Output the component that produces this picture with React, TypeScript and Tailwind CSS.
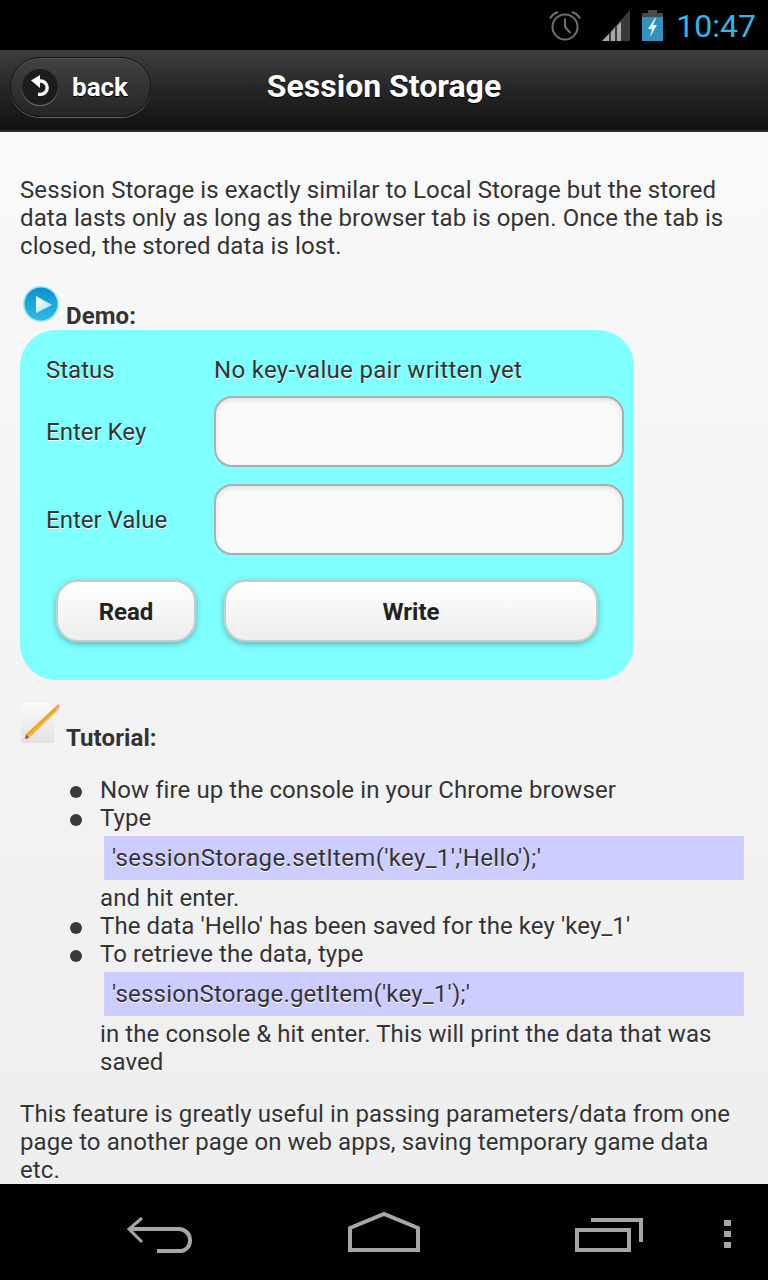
import { ReactNode } from "react";

function StatusBar() {
    return (
        <div className="h-[50px] bg-black flex items-center justify-end pr-[12px]">
            <svg width="34" height="32" viewBox="0 0 34 32" className="mr-[20px] mt-[2px]" fill="none" stroke="#6f6f6f" strokeWidth="2">
                <circle cx="17" cy="17" r="12.5" />
                <path d="M17 8.500V17l5.500 6" />
                <path d="M2 8.500C4 5 6.500 3 10 2M32 8.500C30 5 27.500 3 24 2" />
            </svg>
            <svg width="28" height="32" viewBox="0 0 28 32" className="mr-[12px] mt-[1px]">
                <path d="M0 31 28 0v31z" fill="#3a3a3a" />
                <path d="M0 31 7 24v7zM9 22l4-4.500V31H9zM15 16l4-4.500V31h-4z" fill="#a8a8a8" />
            </svg>
            <svg width="21" height="31" viewBox="0 0 21 31" className="mr-[13px]">
                <rect x="6" y="0" width="9" height="3" fill="#4a4a4a" />
                <rect x="0" y="3" width="21" height="7" fill="#4a4a4a" />
                <rect x="0" y="7" width="21" height="24" fill="#2f93bd" />
                <path d="M13 8 6 19h4l-2 8 7-12h-4l3-7z" fill="#e6f6fb" />
            </svg>
            <span className="font-['Roboto',sans-serif] text-[32px] leading-none text-[#33b5e5] mt-[2px]">10:47</span>
        </div>
    );
}

function Header() {
    return (
        <div className="relative h-[82px] bg-gradient-to-b from-[#3d3d3d] to-[#111111] border-b-2 border-[#2a2a2a] flex items-center justify-center pb-[8px]">
            <div className="absolute left-[10px] top-[7px] w-[141px] h-[60px] rounded-full border border-[#111] bg-gradient-to-b from-[#424242] to-[#252525] shadow-[0_1px_0_#666,inset_0_1px_0_#555] flex items-center pl-[11px]">
                <div className="w-[36px] h-[36px] rounded-full bg-[#1c1c1c] shadow-[0_1px_0_#777] flex items-center justify-center">
                    <svg width="22" height="24" viewBox="0 0 22 24" fill="none" stroke="#fff" strokeWidth="3.400">
                        <path d="M9 6h2.500a6.700 6.700 0 0 1 0 13.400H9" />
                        <path d="M2 5.500 11 0v13z" fill="#fff" stroke="none" />
                    </svg>
                </div>
                <span className="ml-[14px] text-[26px] font-bold text-white [text-shadow:0_1px_1px_#000]">back</span>
            </div>
            <h1 className="text-[32px] font-bold text-white [text-shadow:0_1px_1px_#000]">Session Storage</h1>
        </div>
    );
}

function Row({ label, children }: { label: string; children: ReactNode }) {
    return (
        <div className="flex items-center">
            <div className="w-[168px] shrink-0">{label}</div>
            {children}
        </div>
    );
}

function Field() {
    return (
        <div className="w-[410px] h-[71px] rounded-[18px] border-2 border-[#aeaeae] bg-[#f9f9f9] shadow-[inset_0_2px_4px_rgba(0,0,0,0.1)]" />
    );
}

function Button({ label, width }: { label: string; width: string }) {
    return (
        <div className={`${width} h-[62px] pt-[2px] rounded-[22px] border-2 border-[#cacaca] bg-gradient-to-b from-white to-[#ededed] shadow-[0_2px_6px_rgba(0,0,0,0.3)] flex items-center justify-center font-bold text-[#222]`}>
            {label}
        </div>
    );
}

function Code({ tracking, children }: { tracking: string; children: string }) {
    return (
        <div className={`${tracking} ml-[4px] mt-[4px] mb-[4px] w-[640px] h-[44px] bg-[#ccccff] pl-[8px] flex items-center`}>{children}</div>
    );
}

function Bullet({ children }: { children: ReactNode }) {
    return (
        <li className="relative">
            <span className="absolute left-[-30px] top-[10px] w-[12px] h-[12px] rounded-full bg-[#3a3a3a]" />
            {children}
        </li>
    );
}

function Content() {
    return (
        <div className="h-[1052px] overflow-hidden bg-gradient-to-b from-[#f9f9f9] to-[#eeeeee] px-[20px] pt-[44px] font-['Roboto',sans-serif] text-[24px] leading-[28px] tracking-[0.09px] text-[#333] [text-shadow:0_1px_0_#fff]">
            <p>
                Session Storage is exactly similar to Local Storage but the stored data lasts only as long as the browser tab is open. Once the tab is closed, the stored data is lost.
            </p>
            <div className="flex items-end h-[70px]">
                <svg width="40" height="40" viewBox="0 0 40 40" className="mb-[6px] ml-[2px] mr-[4px]">
                    <defs>
                        <linearGradient id="demoBlue" x1="0" y1="0" x2="0" y2="1">
                            <stop offset="0" stopColor="#0f8fd0" />
                            <stop offset="1" stopColor="#2bbde8" />
                        </linearGradient>
                        <linearGradient id="demoTri" x1="0" y1="0" x2="1" y2="1">
                            <stop offset="0" stopColor="#ffffff" />
                            <stop offset="1" stopColor="#a8e2f4" />
                        </linearGradient>
                    </defs>
                    <circle cx="19" cy="20" r="18" fill="#a8e6f5" />
                    <circle cx="19" cy="20" r="16.500" fill="url(#demoBlue)" />
                    <path d="M14 12 30 21 14 29z" fill="url(#demoTri)" />
                </svg>
                <b>Demo:</b>
            </div>
            <div className="w-[614px] h-[350px] rounded-[36px] bg-[#7fffff] pl-[26px] pt-[26px] tracking-normal">
                <Row label="Status">
                    <span className="tracking-[0.3px]">No key-value pair written yet</span>
                </Row>
                <div className="mt-[12px] flex flex-col gap-[17px]">
                    <Row label="Enter Key"><Field /></Row>
                    <Row label="Enter Value"><Field /></Row>
                </div>
                <div className="flex gap-[28px] ml-[10px] mt-[25px]">
                    <Button label="Read" width="w-[140px]" />
                    <Button label="Write" width="w-[374px]" />
                </div>
            </div>
            <div className="flex items-end h-[70px] mt-[2px]">
                <svg width="42" height="44" viewBox="0 0 42 44" className="mr-[4px] mb-[6px]">
                    <defs>
                        <linearGradient id="page" x1="0" y1="0" x2="0" y2="1">
                            <stop offset="0" stopColor="#fbfbfb" />
                            <stop offset="1" stopColor="#e2e2e2" />
                        </linearGradient>
                    </defs>
                    <path d="M2 1h26l6 6v32a2 2 0 0 1-2 2H2a1 1 0 0 1-1-1V2a1 1 0 0 1 1-1z" fill="url(#page)" />
                    <path d="M6 32 35 5l3 3L9 36z" fill="#f2b632" />
                    <path d="M7 33 36 6" stroke="#e08a1c" strokeWidth="1" />
                    <path d="M6 32l3 4-4 1z" fill="#6a5a40" />
                    <path d="M35 5l3-3 2 2-2 4z" fill="#e8a090" />
                </svg>
                <b>Tutorial:</b>
            </div>
            <ul className="pl-[80px] mt-[24px]">
                <Bullet>Now fire up the console in your Chrome browser</Bullet>
                <Bullet>
                    Type
                    <Code tracking="tracking-[0.34px]">'sessionStorage.setItem('key_1','Hello');'</Code>
                    and hit enter.
                </Bullet>
                <Bullet>The data 'Hello' has been saved for the key 'key_1'</Bullet>
                <Bullet>
                    To retrieve the data, type
                    <Code tracking="tracking-[0.2px]">'sessionStorage.getItem('key_1');'</Code>
                    in the console &amp; hit enter. This will print the data that was saved
                </Bullet>
            </ul>
            <p className="mt-[24px]">
                This feature is greatly useful in passing parameters/data from one page to another page on web apps, saving temporary game data etc.
            </p>
        </div>
    );
}

function NavBar() {
    return (
        <div className="h-[96px] bg-black">
            <svg width="768" height="96" viewBox="0 0 768 96" fill="none" stroke="#a6a6a6" strokeWidth="4">
                <path d="M142 34 129 45 142 58" strokeWidth="3" />
                <path d="M131 45h48a11 11 0 0 1 11 11v1a10 10 0 0 1-10 10h-23" />
                <path d="M350 66V44l34-14 34 14v22z" />
                <path d="M577 46h52v20h-52zM591 36h50v22" />
                <path d="M724 36h7v6h-7zM724 47h7v6h-7zM724 58h7v6h-7z" fill="#a6a6a6" stroke="none" />
            </svg>
        </div>
    );
}

export default function App() {
    return (
        <div className="w-[768px] h-[1280px] overflow-hidden font-['Roboto',sans-serif]">
            <StatusBar />
            <Header />
            <Content />
            <NavBar />
        </div>
    );
}
